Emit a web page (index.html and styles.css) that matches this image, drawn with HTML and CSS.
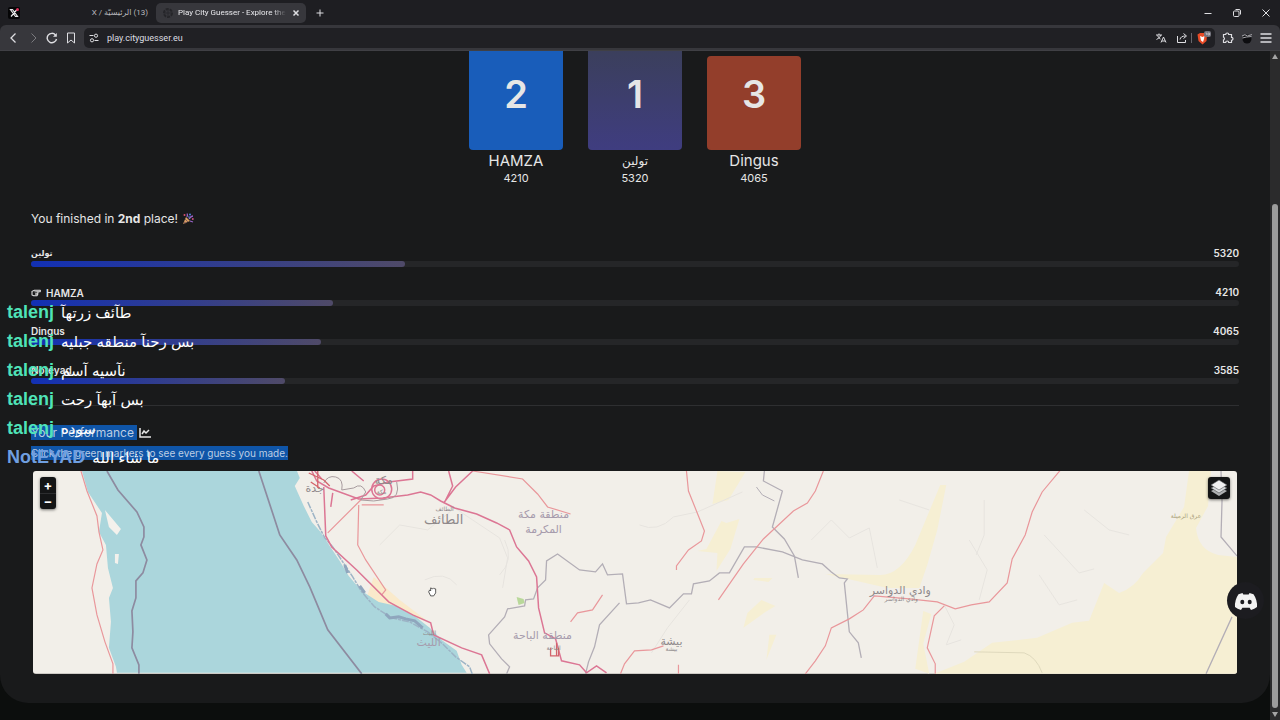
FILE: index.html
```html
<!DOCTYPE html>
<html lang="en">
<head>
    <meta charset="UTF-8">
    <meta name="viewport" content="width=device-width, initial-scale=1.0">
    <title>Play City Guesser - Explore the World</title>
    <link rel="stylesheet" href="styles.css">
</head>

<body>
    <header class="browser">
        <div class="tabs">
            <button class="tab">
                <svg class="favicon" viewBox="0 0 12 12"><rect width="12" height="12" rx="2" fill="#050506"/><path d="M2.5 2.5h2l5 7h-2zM9 2.5 3 9.500" fill="none" stroke="#e8e8ea" stroke-width="1.200"/><circle cx="9.500" cy="2.500" r="1.500" fill="#d8305a"/></svg>
                <span dir="rtl">(13) الرئيسيّة / X</span>
            </button>
            <div class="tab active">
                <svg class="favicon" viewBox="0 0 12 12"><circle cx="6" cy="6" r="4" fill="none" stroke="#252529" stroke-width="2" stroke-dasharray="3 1"/><path d="M2 6h8M6 2v8" stroke="#29292d"/></svg>
                <span class="tab-title">Play City Guesser - Explore the World</span>
                <button class="icon" aria-label="Close tab"><svg viewBox="0 0 12 12"><path d="m3.500 3.500 5 5m0-5-5 5" stroke-width="1.500"/></svg></button>
            </div>
            <button class="icon new-tab" aria-label="New tab"><svg viewBox="0 0 12 12"><path d="M6 2.500v7M2.500 6h7"/></svg></button>
            <div class="window-buttons">
                <button class="icon" aria-label="Minimize"><svg viewBox="0 0 12 12"><path d="M2.500 6.500h7"/></svg></button>
                <button class="icon" aria-label="Restore"><svg viewBox="0 0 12 12"><rect x="2.500" y="4" width="5.500" height="5.500" rx="1"/><path d="M4.500 2.500H8Q9.500 2.500 9.500 4v3.500"/></svg></button>
                <button class="icon" aria-label="Close"><svg viewBox="0 0 12 12"><path d="m2.500 2.500 7 7m0-7-7 7"/></svg></button>
            </div>
        </div>
        <div class="toolbar">
            <div class="nav">
                <button class="icon" aria-label="Back"><svg viewBox="0 0 12 12"><path d="M7.500 1.500 3 6l4.500 4.500" stroke-width="1.300"/></svg></button>
                <button class="icon dim" aria-label="Forward"><svg viewBox="0 0 12 12"><path d="M4.500 1.500 9 6l-4.500 4.500"/></svg></button>
                <button class="icon" aria-label="Reload"><svg viewBox="0 0 12 12"><path d="M10.500 7A4.700 4.700 0 1 1 9.500 3" stroke-width="1.400"/><path d="M10.800 1v3.800H7z" fill="#dedee2" stroke="none"/></svg></button>
                <button class="icon" aria-label="Bookmark"><svg viewBox="0 0 12 12"><path d="M2.500 1h7v10L6 8l-3.500 3z"/></svg></button>
            </div>
            <div class="address">
                <svg class="glyph" viewBox="0 0 12 12"><path d="M1.500 3.500h4M6.500 8.500h4"/><circle cx="8" cy="3.700" r="1.600"/><circle cx="4" cy="8.300" r="1.600"/></svg>
                <input type="text" value="play.cityguesser.eu" aria-label="Address">
                <button class="icon" aria-label="Translate"><svg viewBox="0 0 12 12"><path d="M1 3h6M4 1.500V3m2 0Q5 6 1.500 7.500M2.500 3.500Q3.500 6 5.500 7M6 10.500 8.500 5l2.500 5.500M7 9h3"/></svg></button>
                <button class="icon share" aria-label="Share"><svg viewBox="0 0 12 12"><path d="M1.500 4v6.500h8V8M4 7.500Q4.500 4 9.500 4M7.500 1.500 10.500 4 7.500 6.500"/></svg></button>
                <span class="divider"></span>
                <button class="icon shield" aria-label="Shields"><svg viewBox="0 0 14 14"><path d="M.5 3.500 3 2h5l2 1.500-.500 6.500L5.500 13.500 1.500 10z" fill="#e84b27" stroke="none"/><path d="m3 5 2.500 1 2-1-.500 3-1 3-2-1.500z" fill="#fff" stroke="none"/><rect x="7" y="0" width="7" height="6" rx="2" fill="#73737c" stroke="none"/><path d="M8.500 2h1.200v2M11 2h1.500v2H11z" stroke-width=".6"/></svg></button>
            </div>
            <button class="icon" aria-label="Extensions"><svg viewBox="0 0 12 12"><path d="M1.500 2.500h2.200a1.500 1.500 0 0 1 3 0h2.800v2.800a1.500 1.500 0 0 1 0 3v2.200H6.700a1.500 1.500 0 0 0-3 0H1.500V8a1.500 1.500 0 0 0 0-2.800z" stroke-width="1.200"/></svg></button>
            <button class="icon" aria-label="Profile"><svg viewBox="0 0 12 12"><circle cx="6" cy="7" r="4.500" fill="#0d0d10" stroke="none"/><path d="M1 4Q4 1.500 6.500 4L11 2.500M1.500 6l4-1 5-.5" stroke="#a5a5aa"/></svg></button>
            <button class="icon menu" aria-label="Menu"><svg viewBox="0 0 12 12"><path d="M.5 2h11M.5 6h11M.5 10h11" stroke-width="1.300"/></svg></button>
        </div>
    </header>

    <div class="viewport">
        <main class="page">
            <section class="card">
                <div class="podium">
                    <div class="place second">
                        <div class="block">2</div>
                        <div class="player">HAMZA</div>
                        <div class="points">4210</div>
                    </div>
                    <div class="place first">
                        <div class="block">1</div>
                        <div class="player" lang="ar">تولين</div>
                        <div class="points">5320</div>
                    </div>
                    <div class="place third">
                        <div class="block">3</div>
                        <div class="player">Dingus</div>
                        <div class="points">4065</div>
                    </div>
                </div>

                <p class="result"><span>You finished in <b>2nd</b> place!</span>
                    <svg class="party" viewBox="0 0 12 12"><path d="m1 11 3-7 4 4z" fill="#d9a160"/><path d="m2 9 2 1M3 6l3 3" stroke="#8a5a62"/><path d="M5 4Q6 2 5 .5M7 6q2-3 4-3M8 8l3 1" fill="none" stroke="#9a63c8" stroke-width="1.300"/><circle cx="2.500" cy="2" r="1" fill="#d8516e"/><circle cx="8" cy="1.500" r="1" fill="#4c87dc"/><circle cx="10.800" cy="6" r="1" fill="#c8507c"/><circle cx="7" cy="4" r=".8" fill="#5e9ae0"/></svg>
                </p>

                <div class="scores">
                    <div class="score">
                        <div class="score-head"><span lang="ar">تولين</span><span>5320</span></div>
                        <div class="track"><div class="fill" style="width: 31%"></div></div>
                    </div>
                    <div class="score">
                        <div class="score-head">
                            <span class="me"><svg viewBox="0 0 12 10"><path d="M1 3 4 1.500h7q1 1 0 2H8q1 1 0 2 1 1-.5 1.500.500 1.500-1 1.500H3L1 7.500z" fill="#1a1b1c" stroke="#e6e6e6" stroke-width="1.300"/><path d="M4 3.500h3.500M5 5.500h2.500M5 7h2" stroke="#e6e6e6"/></svg>HAMZA</span>
                            <span>4210</span>
                        </div>
                        <div class="track"><div class="fill" style="width: 25%"></div></div>
                    </div>
                    <div class="score">
                        <div class="score-head"><span>Dingus</span><span>4065</span></div>
                        <div class="track"><div class="fill" style="width: 24%"></div></div>
                    </div>
                    <div class="score">
                        <div class="score-head"><span>Noteyad</span><span>3585</span></div>
                        <div class="track"><div class="fill" style="width: 21%"></div></div>
                    </div>
                </div>

                <div class="performance">
                    <h2><span class="selected">Your Performance&nbsp;</span><svg viewBox="0 0 12 10"><path d="M1 0v9h11M3 6l2-3 2 2 3-3" fill="none" stroke="#e6e6e6" stroke-width="1.500"/></svg></h2>
                    <p><span class="selected">Click the green markers to see every guess you made.</span></p>
                    <div class="map">
                        <svg class="tiles" viewBox="33 471 1205 203" preserveAspectRatio="xMidYMid slice">
                            <rect x="33" y="471" width="1205" height="203" fill="#f2efe9"/>
                            <!-- desert -->
                            <g fill="#f6efd3">
                                <path d="M1190 471h22l-3 35-12 22q2 22 22 27l19 2v117H935l30-12 28-19 45-5 35-15 17-2 15-38 15 10q15-5 24-20l20-20 3-16 18-30z"/>
                                <path d="M941 485h6l-9 45-10 35-8 23h-32q-30-7-62-14l55 1q20 0 35-30z"/>
                                <path d="m718 471 28 1-17 28-16 4zM722 521l-15 28-9 2 20 2-1 18 14-22 9-30-13 4zM755 578l18 0-4 4-15-2zM762 600l14 6-10 6-22 16 4-15zM770 635h7l-10 25zM924 611l-8 58 14 5-6-30 8-30z"/>
                                <path d="m374 577-8 23q15 15 38 19l22 1-26-20z" fill="#faeacb"/>
                            </g>
                            <!-- sea -->
                            <path d="M82 471 88 492l14 21-3 19 7 13 2 23 5 20-4 10 2 24-2 26 7 19 1 6h350l-5-8-5-14-14-10-13-13-15-12-18-10-18-4-17-11-13-15-9-15-10-15-10-15-8-9-8-16-9-20 5-8-4-10-4-22z" fill="#abd6dc"/>
                            <path d="m105 510 16 19-4 6-8-8zM115 554l4 0-1 10-3-1z" fill="#f3f1ec"/>
                            <path d="m308 502 9 20 8 16 8 9 10 15 10 15 9 15 13 15 17 11 18 4 18 10 15 12 13 13 14 10 5 14" fill="none" stroke="#9db4c6" stroke-width="1.500" stroke-dasharray="7 1 3 1"/>
                            <path d="m345 565 3 8M360 586l5 7M386 614l4 4 9-1 7 2 9 2 8 7" fill="none" stroke="#8fa6bd" stroke-width="3"/>
                            <g fill="none" stroke="#e7e4df">
                                <path d="m380 545 20-20 28 5 27-22 45 30 8 20-5 30M500 575q15-15 5-35m-80 40q20-10 32 5M640 525q18 8 34-8l24-5 45-20M812 540l20-20 18 18 20-10 8 40M970 540l18 30-8 30M1085 510l25 20 20 5M1045 535l35 38 15-4M945 605l10 20-8 20 15-5M690 600l-22 28-16 25M900 500l30 10M985 500v35l-8 20M1040 575l20 30 18-5"/>
                            </g>
                            <!-- borders -->
                            <g fill="none" stroke="#8d8ba0" stroke-width="1.700">
                                <path d="m107 471 11 19 19 22 7 15v10l-3 8 6 15-4 13-7 8v17l-4 13 1 21-1 16 7 17v9M259 471l21 64 17 25 13 27 18 43 34 44"/>
                            </g>
                            <g fill="none" stroke="#b3aeb6" stroke-width="1.300">
                                <path d="m765 471-1 10 19 10-10 36 12 12 10 17 4 22M507 674l3-7-8-8-12-15-1-9 16-18 3-8 17-3 1-6 8-1 4-11 8-8 1-19 11-7 22 16 16 2 7-8 5 11 15-1 4 30 12-1 12-3 19 8 14-14h8l2-10 16-3 10-8h10l15-26 12 0 26 5 20 8 20 4 9 8 8 6 8 1-3 4 5 49 9 11 3 15M620 603l-20 22-5 22-6 15-3 12"/>
                                <path d="M1222 471l1 30-1 36 16 19M1233 617l-26 57"/>
                                <path d="m975 652 50 1q12 4 18 20" stroke="#dfd9bd" stroke-width="1"/>
                                <path d="m757 487 6 8 12 6" stroke-width="1"/>
                            </g>
                            <!-- roads -->
                            <g fill="none" stroke="#e9979b" stroke-width="1.200">
                                <path d="m81 471 6 20 10 25 2 16 4 18-6 14-5 24 5 27 8 27 8 22v10"/>
                                <path d="m687 471 2 20 8 20 8 20-3 10-13 9-12 16v4M824 471l-8 20-8 12-14 8-30 28-20 25-25 36M806 674l10-13 10-15 6-18 18-9 14-9 11-14 35 3 28 3 18 7 16-4 18-3 18-19 5-24 13-24 7-23 10-20 20-24M945 606l-10 10-7 32 8 16v10M621 674l4-10 10-13 17-1 12-4M679 665v9"/>
                                <path d="m473 471 50 8 15 15 10 13 23 7M603 595l-10 15-15 3-7 9M359 505l-1 40 8 15 20 30-4 5M328 533l34-34M362 505h22"/>
                            </g>
                            <g fill="none" stroke="#dc7694" stroke-width="1.500">
                                <path d="m324 487 2 49 6 11 25 23 32 32 24 13 18 8 3 12 28 13 20 7 8 19"/>
                                <path d="m312 471 5 10 12 7 30 11 24-1 25-3 13-3 10 3 10 6 14 7 22 6 20 9 13 7 7 17 12 14 8 16 2 31 6 25 11 6 6 22 18 4 7 8 10-7 10 7"/>
                                <path d="m473 471-17 16-12 16M449 471l4 15-8 16M413 471v8l-24 3-15 4-8 9-15 5M333 493l-2 14M315 471l7 8M352 471l12 10"/>
                                <circle cx="382" cy="489" r="10"/><circle cx="380" cy="490" r="5"/>
                            </g>
                            <path d="M324 483q4-8 12-6t6 13l12-2q8-6 12 4l-5 8 13 1 14-2q13-1 9-17" fill="none" stroke="#a79b9e"/>
                            <path d="m309 473 15 7 6 6M318 471v17M311 482l9 6M551 648v8h8v-8M557 643v13" fill="none" stroke="#d3636b" stroke-width="1.300"/>
                            <path d="m517 597 7 2 1 4-6 2z" fill="#b9d89a"/>
                            <g class="labels" text-anchor="middle" lang="ar">
                                <text x="315" y="492" class="town">جدة</text>
                                <text x="384" y="484" class="town">مكة</text>
                                <text x="382" y="494" class="tiny">مكة</text>
                                <text x="445" y="511" class="tiny">الطائف</text>
                                <text x="444" y="524" class="town big">الطائف</text>
                                <text x="544" y="518" class="region">منطقة مكة</text>
                                <text x="544" y="533" class="region">المكرمة</text>
                                <text x="430" y="635" class="tiny">الليث</text>
                                <text x="429" y="646" class="region">الليث</text>
                                <text x="543" y="639" class="region">منطقة الباحة</text>
                                <text x="554" y="650" class="tiny">الباحة</text>
                                <text x="672" y="645" class="town">بيشة</text>
                                <text x="672" y="651" class="tiny">بيشة</text>
                                <text x="901" y="594" class="town">وادي الدواسر</text>
                                <text x="902" y="601" class="tiny">وادي الدواسر</text>
                                <text x="1187" y="518" class="sand">عرق الرميلة</text>
                            </g>
                            <path d="m429 592 1-2 1 1v-3l2 1 1-1 1 1 1 0v4l-2 3h-3z" fill="#fff" stroke="#333" stroke-width=".8"/>
                        </svg>
                        <div class="zoom">
                            <button aria-label="Zoom in">+</button>
                            <button aria-label="Zoom out">−</button>
                        </div>
                        <button class="layers" aria-label="Layers"><svg viewBox="0 0 18 18"><path d="m1 12 8-4 8 4-8 5z" fill="#aeb0b2"/><path d="m1 9 8-4 8 4-8 5z" fill="#dadcde" stroke="#4a4b4d" stroke-width=".6"/><path d="m1 6 8-5 8 5-8 5z" fill="#f0f0f0" stroke="#55575a" stroke-width=".6"/></svg></button>
                    </div>
                </div>
            </section>
            <a class="discord" href="#" aria-label="Discord"><svg viewBox="0 0 24 18"><path d="M8.500 1 4.500 2.200Q.5 8 1 15q2.500 2.200 6 3l1.400-2.300h7.200L17 18q3.500-.8 6-3 .5-7-3.500-12.800L15.500 1l-.8 1.500H9.300z" fill="#f2f2f2"/><ellipse cx="8.300" cy="10" rx="2" ry="2.300" fill="#1c1c20"/><ellipse cx="15.700" cy="10" rx="2" ry="2.300" fill="#1c1c20"/></svg></a>
        </main>
        <div class="scrollbar"><i class="up"></i><i class="thumb"></i><i class="down"></i></div>
    </div>

    <ul class="chat">
        <li><b>talenj</b> <span dir="rtl">طآئف زرتهآ</span></li>
        <li><b>talenj</b> <span dir="rtl">بس رحنآ منطقه جبليه</span></li>
        <li><b>talenj</b> <span dir="rtl">نآسيه آسم</span></li>
        <li><b>talenj</b> <span dir="rtl">بس آبهآ رحت</span></li>
        <li><b>talenj</b> <span dir="rtl">سوده</span></li>
        <li><b class="blue">NotEYAD</b> <span dir="rtl">ما شاء الله</span></li>
    </ul>
</body>
</html>
```
FILE: styles.css
```css
* {
    box-sizing: border-box;
}

body {
    margin: 0;
    height: 100vh;
    display: flex;
    flex-direction: column;
    overflow: hidden;
    background: #0c0e0d;
    color: #e6e6e6;
    font-family: Inter, "DejaVu Sans", sans-serif;
}

button {
    padding: 0;
    border: none;
    background: none;
    color: inherit;
    font: inherit;
    cursor: pointer;
}

svg {
    display: block;
}

/* browser */
.browser {
    font-family: Roboto, "DejaVu Sans", sans-serif;
    font-size: 8px;
    background: #1e1e22;
}

.tabs {
    display: flex;
    align-items: center;
    height: 25px;
    padding-left: 8px;
}

.tab {
    display: flex;
    align-items: center;
    justify-content: space-between;
    width: 148px;
    height: 20px;
    padding-right: 8px;
    color: #b9b9be;
}

.tab.active {
    gap: 4px;
    width: 150px;
    padding: 0 4px 0 6px;
    border-radius: 5px;
    background: #37373c;
    color: #e8e8ec;
}

.favicon {
    width: 12px;
    height: 12px;
    flex: none;
}

.tab-title {
    flex: 1;
    overflow: hidden;
    white-space: nowrap;
    -webkit-mask-image: linear-gradient(to right, #000 88%, transparent);
    mask-image: linear-gradient(to right, #000 88%, transparent);
}

.icon svg, .glyph {
    width: 12px;
    height: 12px;
    fill: none;
    stroke: #dedee2;
    stroke-width: 1;
}

.new-tab {
    margin-left: 8px;
}

.window-buttons {
    display: flex;
    gap: 17px;
    margin-left: auto;
    padding-right: 8px;
}

.toolbar {
    display: flex;
    align-items: center;
    gap: 7px;
    height: 26px;
    padding: 0 8px;
    border-bottom: 1px solid #404045;
    border-radius: 6px 6px 0 0;
    background: #37373c;
}

.nav {
    display: flex;
    gap: 7px;
}

.dim {
    opacity: .4;
}

.address {
    flex: 1;
    display: flex;
    align-items: center;
    gap: 5px;
    height: 20px;
    padding: 0 4px;
    border-radius: 5px;
    background: #202024;
}

.address .share {
    margin-left: 4px;
}

.address input {
    flex: 1;
    border: none;
    outline: none;
    background: none;
    color: #dedee2;
    font: 9px Roboto, sans-serif;
}

.address .divider {
    width: 1px;
    height: 10px;
    margin-left: -2px;
    background: #66666c;
}

.shield svg {
    width: 14px;
    height: 14px;
}

/* page */
.viewport {
    flex: 1;
    display: flex;
    min-height: 0;
}

.page {
    position: relative;
    flex: 1;
    min-width: 0;
}

.card {
    padding: 0 31px 29px;
    border-radius: 0 0 28px 28px;
    background: #191a1b;
}

.podium {
    display: flex;
    justify-content: center;
    align-items: flex-end;
    gap: 25px;
    text-align: center;
}

.place {
    width: 94px;
}

.block {
    height: 99px;
    padding-top: 19px;
    border-radius: 0 0 4px 4px;
    font-size: 38px;
    font-weight: 600;
    line-height: 48px;
}

.second .block {
    background: #195dba;
}

.first .block {
    background: linear-gradient(#3b3f5c, #3f3d80);
}

.third .block {
    height: 94px;
    padding-top: 14px;
    border-radius: 4px;
    background: #933e2b;
}

.player {
    font-size: 15px;
    line-height: 21px;
}

.player:lang(ar) {
    font-size: 12px;
}

.points {
    font-size: 11px;
    line-height: 14px;
}

.result {
    display: flex;
    gap: 4px;
    margin: 26px 0 20px;
    font-size: 12px;
    line-height: 16px;
}

.party {
    width: 12px;
    height: 12px;
    margin-top: 2px;
}

.scores {
    display: grid;
    gap: 19px;
    padding-bottom: 21px;
    border-bottom: 1px solid #2e2f31;
}

.score-head {
    display: flex;
    justify-content: space-between;
    height: 14px;
    font-size: 10px;
    font-weight: 600;
    line-height: 12px;
}

.score-head :lang(ar) {
    font-size: 8px;
}

.me {
    display: flex;
    align-items: center;
    gap: 5px;
}

.me svg {
    width: 10px;
    height: 8px;
}

.track {
    height: 6px;
    border-radius: 3px;
    background: #252628;
}

.fill {
    height: 6px;
    border-radius: 3px;
    background: linear-gradient(to right, #1230b4, #4f4a68);
}

.performance h2 {
    display: flex;
    align-items: center;
    gap: 2px;
    margin: 19px 0 6px;
    font-size: 12px;
    font-weight: 400;
    line-height: 15px;
}

.performance h2 svg {
    width: 12px;
    height: 10px;
}

.performance p {
    margin: 0 0 11px;
    font-size: 10px;
    line-height: 14px;
}

.selected {
    display: inline-block;
    background: #0f55a8;
    color: #bccde4;
}

.map {
    position: relative;
    margin: 0 2px;
    overflow: hidden;
    border-radius: 3px;
}

.tiles {
    width: 100%;
    height: auto;
}

.labels {
    font-family: "DejaVu Sans", sans-serif;
    fill: #8f898b;
}

.town {
    font-size: 11px;
}

.big {
    font-size: 13px;
}

.region {
    font-size: 11px;
    fill: #a69bac;
}

.tiny {
    font-size: 6px;
}

.sand {
    font-size: 6px;
    fill: #aaa17c;
}

.zoom {
    position: absolute;
    top: 6px;
    left: 7px;
    display: grid;
    overflow: hidden;
    border-radius: 3px;
    background: #141516;
    box-shadow: 0 1px 3px #0008;
}

.zoom button {
    width: 16px;
    height: 16px;
    color: #fff;
    font-size: 13px;
    font-weight: 700;
    line-height: 15px;
}

.zoom button + button {
    border-top: 1px solid #2c2d2f;
}

.layers {
    position: absolute;
    top: 6px;
    right: 7px;
    display: grid;
    place-items: center;
    width: 22px;
    height: 22px;
    border-radius: 3px;
    background: #141516;
    box-shadow: 0 1px 3px #0008;
}

.layers svg {
    width: 18px;
    height: 18px;
}

.discord {
    position: absolute;
    right: 6px;
    bottom: 101px;
    display: grid;
    place-items: center;
    width: 37px;
    height: 37px;
    border-radius: 50%;
    background: #1c1c20;
}

.discord svg {
    width: 24px;
    height: 18px;
}

.scrollbar {
    display: flex;
    flex-direction: column;
    align-items: center;
    width: 10px;
    padding: 3px 0;
    background: #2b2b2c;
}

.scrollbar .up, .scrollbar .down {
    border: 3px solid transparent;
}

.scrollbar .up {
    border-top: none;
    border-bottom: 5px solid #a5a5a5;
}

.scrollbar .down {
    border-bottom: none;
    border-top: 5px solid #a5a5a5;
}

.scrollbar .thumb {
    width: 6px;
    height: 76%;
    margin: auto 0 4px;
    border-radius: 3px;
    background: #9c9c9c;
}

/* stream chat over the page */
.chat {
    position: absolute;
    top: 298px;
    left: 7px;
    margin: 0;
    padding: 0;
    list-style: none;
    font-family: "Liberation Sans", "DejaVu Sans", sans-serif;
    font-size: 15px;
    color: #fff;
}

.chat li {
    display: flex;
    align-items: center;
    gap: 7px;
    height: 29px;
    white-space: nowrap;
}

.chat b {
    color: #4fe3b8;
    font-size: 18px;
}

.chat .blue {
    color: #6f9fe0;
}
```
